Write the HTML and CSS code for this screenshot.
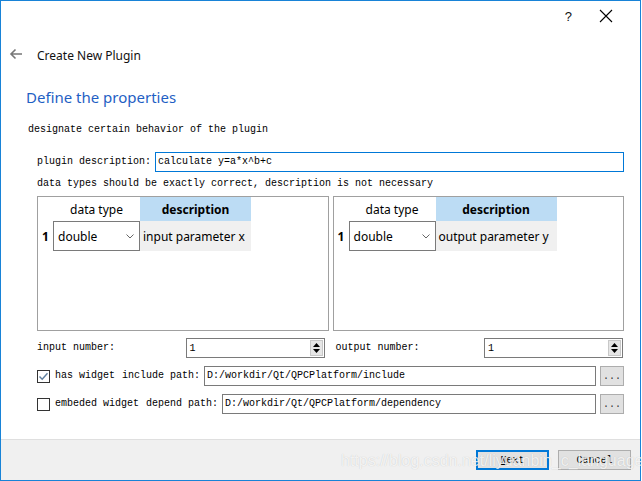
FILE: index.html
```html
<!DOCTYPE html>
<html>
<head>
<meta charset="utf-8">
<link rel="stylesheet" href="styles.css">
</head>
<body>
<div class="window">
  <div class="titlebar">
    <span class="help">?</span>
    <svg class="close" width="14" height="14" viewBox="0 0 14 14"><path d="M1 1 L13 13 M13 1 L1 13" stroke="#000" stroke-width="1.1" fill="none"/></svg>
  </div>
  <div class="header">
    <svg class="back" width="14" height="12" viewBox="0 0 14 12"><path d="M13 6 H2 M6.5 1.5 L2 6 L6.5 10.5" stroke="#777" stroke-width="1.6" fill="none"/></svg>
    <span class="htitle">Create New Plugin</span>
  </div>
  <div class="content">
    <h1 class="title">Define the properties</h1>
    <p class="sub">designate certain behavior of the plugin</p>
    <div class="form">
      <div class="descrow">
        <span class="lbl">plugin description:</span>
        <div class="field focus">calculate y=a*x^b+c</div>
      </div>
      <div class="hint">data types should be exactly correct, description is not necessary</div>
      <div class="tables">
        <div class="tbox">
          <div class="grid gin">
            <div class="corner"></div>
            <div class="hd">data type</div>
            <div class="hd sel">description</div>
            <div class="rn">1</div>
            <div class="combo"><span>double</span><svg width="8" height="5" viewBox="0 0 8 5"><path d="M0.5 0.5 L4 4 L7.5 0.5" stroke="#666" stroke-width="1" fill="none"/></svg></div>
            <div class="cell">input parameter x</div>
          </div>
        </div>
        <div class="tbox">
          <div class="grid gout">
            <div class="corner"></div>
            <div class="hd">data type</div>
            <div class="hd sel">description</div>
            <div class="rn">1</div>
            <div class="combo"><span>double</span><svg width="8" height="5" viewBox="0 0 8 5"><path d="M0.5 0.5 L4 4 L7.5 0.5" stroke="#666" stroke-width="1" fill="none"/></svg></div>
            <div class="cell">output parameter y</div>
          </div>
        </div>
      </div>
      <div class="nums">
        <div class="num left">
          <span class="lbl">input number:</span>
          <div class="spin"><span>1</span><div class="arrows"><svg width="7" height="4" viewBox="0 0 7 4"><path d="M0 4 L3.5 0 L7 4Z" fill="#000"/></svg><svg width="7" height="4" viewBox="0 0 7 4"><path d="M0 0 L3.5 4 L7 0Z" fill="#000"/></svg></div></div>
        </div>
        <div class="num right">
          <span class="lbl">output number:</span>
          <div class="spin"><span>1</span><div class="arrows"><svg width="7" height="4" viewBox="0 0 7 4"><path d="M0 4 L3.5 0 L7 4Z" fill="#000"/></svg><svg width="7" height="4" viewBox="0 0 7 4"><path d="M0 0 L3.5 4 L7 0Z" fill="#000"/></svg></div></div>
        </div>
      </div>
      <div class="pathrow r1">
        <span class="check on"><svg width="11" height="11" viewBox="0 0 11 11"><path d="M1.5 5.5 L4.2 8.3 L9.5 2.2" stroke="#5f7f9f" stroke-width="1.4" fill="none"/></svg></span>
        <span class="lbl cb">has widget</span>
        <span class="lbl">include path:</span>
        <div class="field path">D:/workdir/Qt/QPCPlatform/include</div>
        <div class="dots">...</div>
      </div>
      <div class="pathrow r2">
        <span class="check"></span>
        <span class="lbl cb">embeded widget</span>
        <span class="lbl">depend path:</span>
        <div class="field path">D:/workdir/Qt/QPCPlatform/dependency</div>
        <div class="dots">...</div>
      </div>
    </div>
  </div>
  <div class="footer">
    <div class="btn default"><u>N</u>ext</div>
    <div class="btn">Cancel</div>
    <span class="watermark">https://blog.csdn.net/liyuanbin_c_language</span>
  </div>
</div>
</body>
</html>
```
FILE: styles.css
```css
html, body { margin: 0; padding: 0; background: #fff; }
.window {
  box-sizing: border-box;
  width: 641px;
  height: 481px;
  border: 1px solid #1883d7;
  display: flex;
  flex-direction: column;
  background: #fff;
  position: relative;
  font-family: "Noto Sans", "Liberation Sans", sans-serif;
  color: #000;
}
.titlebar {
  height: 30px;
  display: flex;
  align-items: center;
  justify-content: flex-end;
  padding-right: 27px;
  gap: 27px;
}
.help { font-size: 13px; font-family: "Liberation Sans", sans-serif; color: #111; }
.close { display: block; }
.header {
  height: 20px;
  margin-top: 14px;
  display: flex;
  align-items: center;
  padding-left: 8px;
}
.back { display: block; margin-top: -3px; }
.htitle { margin-left: 14px; font-size: 12px; color: #111; }
.content { padding-left: 24px; }
.title {
  margin: 22px 0 0 1px;
  height: 20px;
  line-height: 20px;
  font-size: 15px;
  font-weight: normal;
  color: #1f5fc4;
}
.sub, .lbl, .hint, .field, .dots, .btn {
  font-family: "Liberation Mono", "DejaVu Sans Mono", monospace;
  font-size: 10px;
}
.sub { margin: 17px 0 0 3px; height: 12px; line-height: 12px; }
.form { margin-left: 12px; width: 587px; }
.descrow { margin-top: 16px; display: flex; align-items: center; height: 20px; gap: 4px; }
.lbl { white-space: pre; line-height: 12px; }
.field {
  box-sizing: border-box;
  height: 20px;
  border: 1px solid #7a7a7a;
  line-height: 18px;
  padding-left: 2px;
  background: #fff;
  white-space: pre;
}
.descrow .field { flex: 1; }
.field.focus { border-color: #0078d7; }
.hint { margin-top: 6px; height: 12px; line-height: 12px; }
.tables { margin-top: 6px; display: flex; gap: 4px; height: 135px; }
.tbox {
  box-sizing: border-box;
  border: 1px solid #a0a0a0;
  flex: 1;
  background: #fff;
}
.grid { display: grid; grid-template-rows: 24px 30px; font-size: 12px; }
.gin { grid-template-columns: 15px 87px 111px; }
.gout { grid-template-columns: 15px 87px 121px; }
.hd { display: flex; align-items: center; justify-content: center; }
.hd.sel { background: #bcdcf4; font-weight: bold; }
.rn { font-weight: bold; display: flex; align-items: center; justify-content: center; }
.combo {
  box-sizing: border-box;
  border: 1px solid #7a7a7a;
  display: flex;
  align-items: center;
  justify-content: space-between;
  padding: 0 5px 0 4px;
  height: 30px;
}
.cell { background: #f0f0f0; display: flex; align-items: center; padding-left: 3px; white-space: nowrap; }
.nums { margin-top: 7px; display: flex; gap: 4px; height: 20px; }
.num { flex: 1; display: flex; align-items: center; justify-content: space-between; }
.num.left { padding-right: 3px; }
.num.right { padding-left: 4px; padding-right: 1px; }
.spin {
  box-sizing: border-box;
  width: 139px;
  height: 20px;
  border: 1px solid #7a7a7a;
  display: flex;
  align-items: center;
  justify-content: space-between;
  padding-left: 3px;
  font-family: "Liberation Mono", monospace;
  font-size: 10px;
}
.arrows {
  width: 13px;
  height: 16px;
  margin-right: 1px;
  background: #e6e6e6;
  border: 1px solid #c8c8c8;
  box-sizing: border-box;
  display: flex;
  flex-direction: column;
  align-items: center;
  justify-content: center;
  gap: 2px;
}
.arrows svg { display: block; }
.pathrow { display: flex; align-items: center; height: 20px; }
.r1 { margin-top: 8px; }
.r2 { margin-top: 8px; }
.check {
  box-sizing: border-box;
  width: 13px;
  height: 13px;
  border: 1px solid #333;
  background: #fff;
  display: flex;
  align-items: center;
  justify-content: center;
}
.check svg { display: block; }
.cb { margin-left: 5px; margin-right: 7px; }
.pathrow .field { flex: 1; margin-left: 4px; }
.dots {
  box-sizing: border-box;
  width: 24px;
  height: 20px;
  margin-left: 4px;
  background: #e1e1e1;
  border: 1px solid #adadad;
  text-align: center;
  line-height: 20px;
  color: #333;
}
.footer {
  margin-top: auto;
  box-sizing: border-box;
  height: 41px;
  border-top: 1px solid #dfdfdf;
  background: #f0f0f0;
  display: flex;
  justify-content: flex-end;
  align-items: center;
  padding-right: 9px;
  gap: 9px;
  position: relative;
}
.btn {
  box-sizing: border-box;
  width: 73px;
  height: 20px;
  background: #e1e1e1;
  border: 1px solid #adadad;
  display: flex;
  align-items: center;
  justify-content: center;
  font-size: 10px;
}
.btn.default { border: 2px solid #0078d7; }
.watermark {
  position: absolute;
  left: 340px;
  top: 12px;
  font-family: "Liberation Sans", sans-serif;
  font-size: 16px;
  color: rgba(255,255,255,0.8);
  text-shadow: 0 0 1px rgba(0,0,0,0.2);
  pointer-events: none;
  white-space: nowrap;
}
```
